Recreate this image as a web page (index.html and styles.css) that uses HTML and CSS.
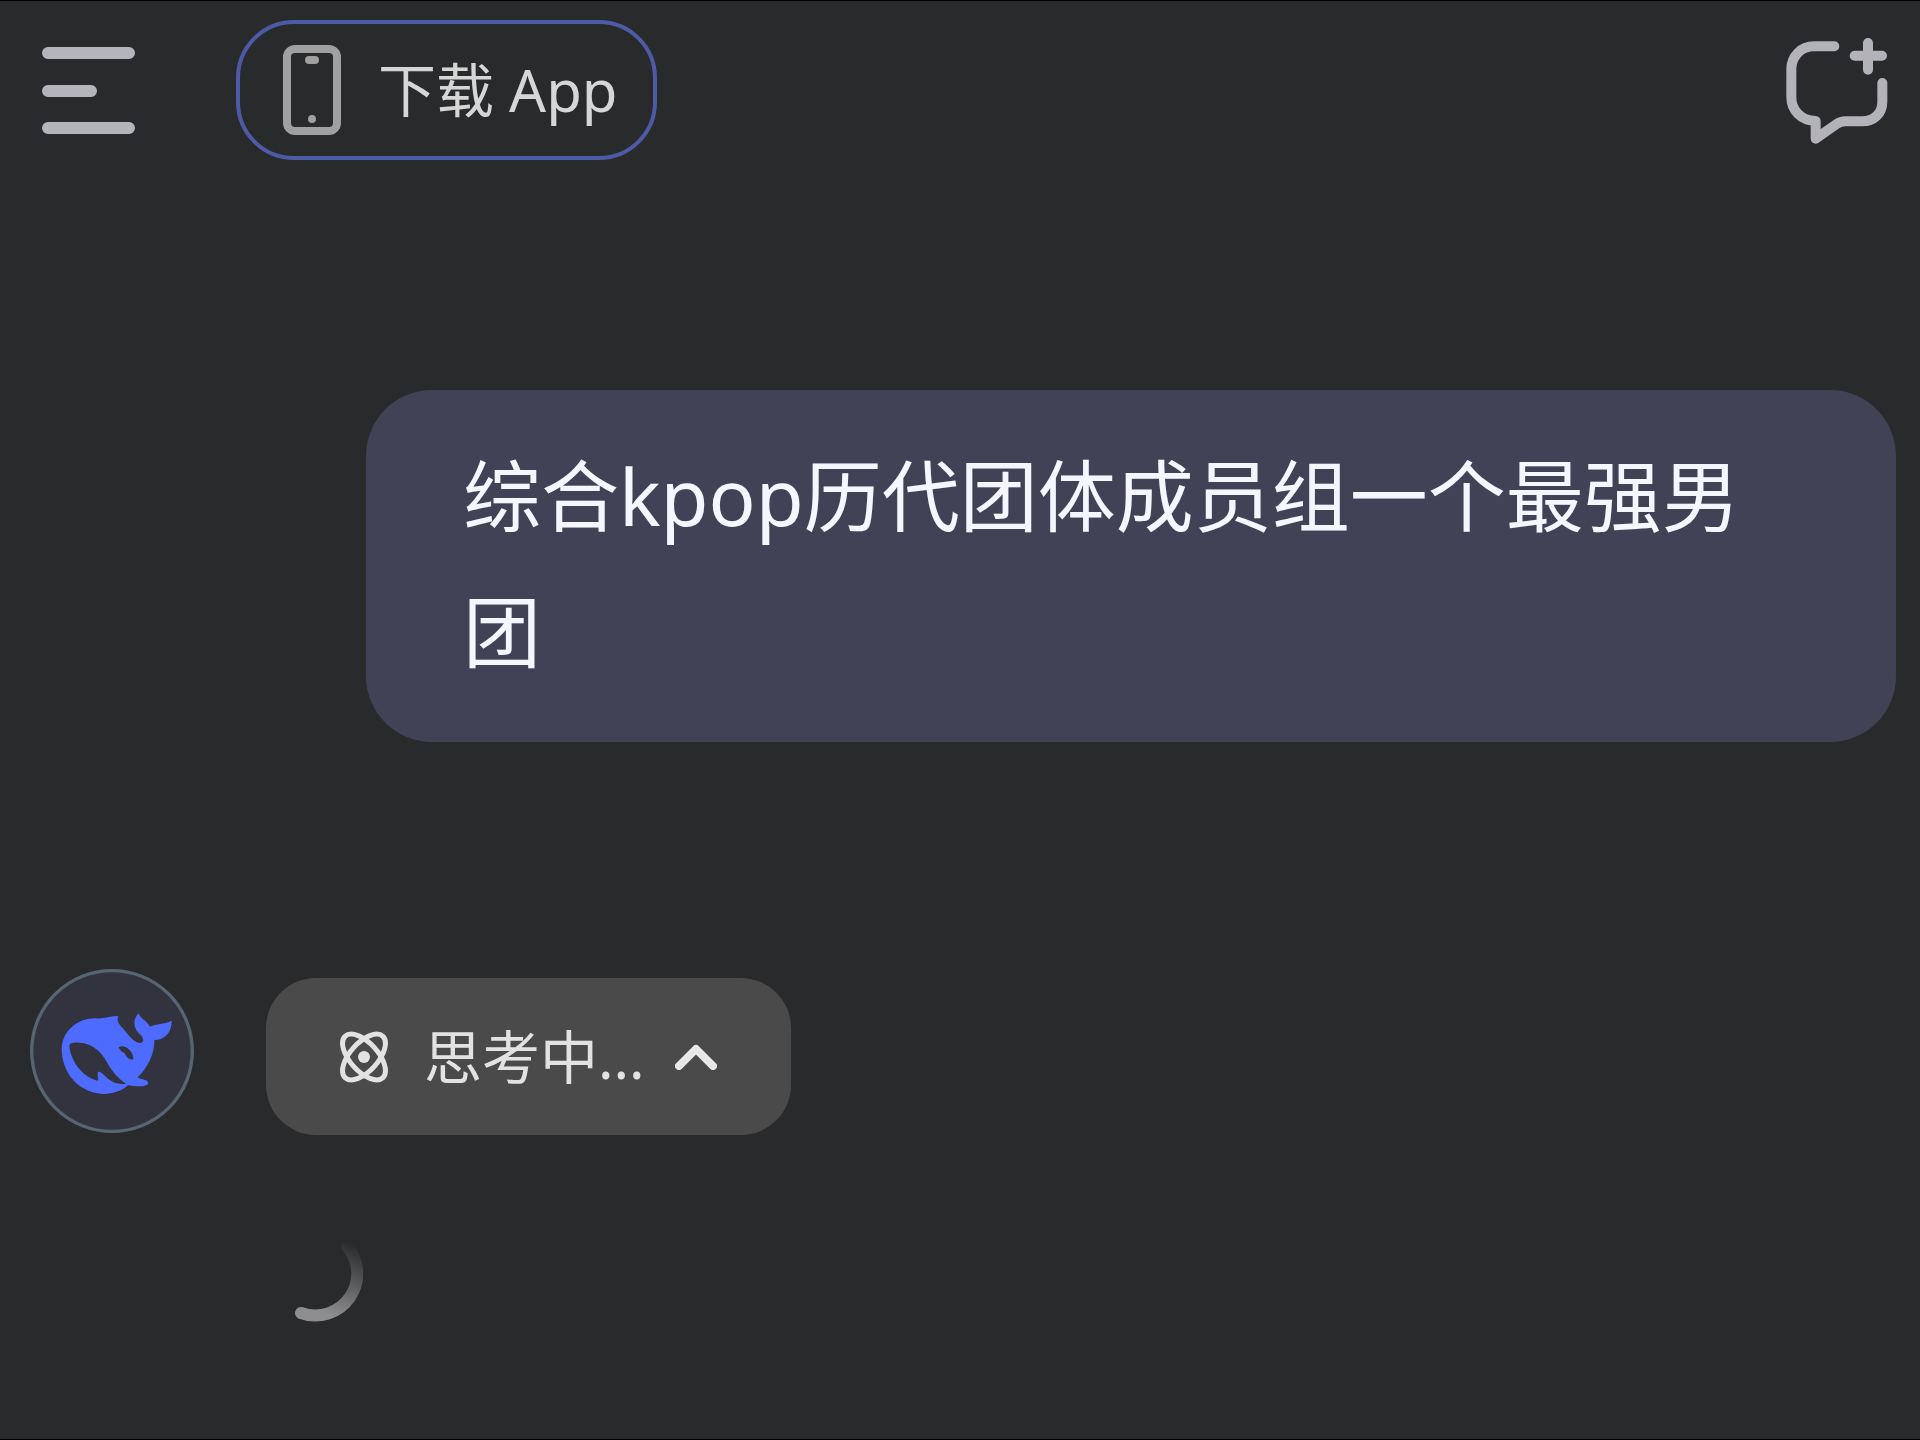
FILE: index.html
```html
<!DOCTYPE html>
<html lang="zh-CN">

<head>
    <meta charset="UTF-8">
    <meta name="viewport" content="width=device-width, initial-scale=1.0">
    <title>Chat</title>
    <link rel="stylesheet" href="styles.css">
</head>

<body>
    <header class="topbar">
        <button class="icon-button" aria-label="菜单">
            <svg class="menu-icon" viewBox="0 0 94 88">
                <path d="M6 7H87M6 45H49M6 82H87" />
            </svg>
        </button>
        <a class="download" href="#">
            <svg class="phone-icon" viewBox="0 0 58 90">
                <rect x="4" y="4" width="50" height="82" rx="8" />
                <path class="speaker" d="M26 15h6" />
                <circle cx="29" cy="74" r="4" />
            </svg>
            <span>下载 App</span>
        </a>
        <button class="icon-button new-chat" aria-label="新对话">
            <svg class="new-chat-icon" viewBox="80 50 306 330">
                <path d="M225 84H164C125 84 96 114 96 152V236C96 276 124 306 169 308V361L232 317Q244 309 258 309H308C344 309 369 285 369 250V194" />
                <path d="M326 74V154M286 112H368" />
            </svg>
        </button>
    </header>

    <main class="chat">
        <div class="message">综合kpop历代团体成员组一个最强男团</div>

        <div class="reply">
            <svg class="avatar" viewBox="60 57 492 492">
                <circle class="ring" cx="306" cy="303" r="241" />
                <path class="whale" fill-rule="evenodd" d="M325 198C319 211 325 222 340 236C356 256 372 278 392 279C402 276 402 266 392 255C374 240 364 215 385 190C392 206 410 212 420 230C440 220 462 224 485 212C486 242 468 270 433 270C434 308 415 352 383 382C391 390 411 386 415 399C411 412 382 410 354 406C327 430 290 435 262 430C200 420 155 365 155 295C158 240 205 205 255 205C285 207 296 198 325 198Z
                    M178 285C185 275 202 277 222 280C255 288 275 310 290 335C305 363 325 386 348 401C320 405 302 394 285 378C276 369 268 363 264 366C260 376 268 385 262 392C215 380 180 330 178 285Z
                    M326 292C344 280 372 306 370 328C358 332 348 320 344 310C337 307 329 301 326 292Z" />
            </svg>
            <div class="reply-body">
                <button class="thinking" aria-expanded="true">
                    <svg class="atom-icon" viewBox="-1 -1 52 52">
                        <ellipse cx="25" cy="25" rx="28" ry="14" transform="rotate(48 25 25)" />
                        <ellipse cx="25" cy="25" rx="28" ry="14" transform="rotate(-48 25 25)" />
                        <circle cx="25" cy="25" r="6" />
                    </svg>
                    <span>思考中...</span>
                    <svg class="chevron-icon" viewBox="0 0 42 26">
                        <path d="M4 22L21 5L38 22" />
                    </svg>
                </button>
                <svg class="spinner" viewBox="0 0 100 100">
                    <defs>
                        <linearGradient id="fade" gradientUnits="userSpaceOnUse" x1="80" y1="12" x2="53" y2="82">
                            <stop offset="0" stop-color="#8e8e90" stop-opacity="0" />
                            <stop offset="1" stop-color="#8e8e90" />
                        </linearGradient>
                    </defs>
                    <path d="M35 84A42 42 0 0 0 81 17" stroke="url(#fade)" />
                </svg>
            </div>
        </div>
    </main>
</body>

</html>
```
FILE: styles.css
```css
* {
    box-sizing: border-box;
}

body {
    min-height: 100vh;
    margin: 0;
    border-top: 1px solid #000;
    border-bottom: 1px solid #000;
    background-color: #292a2c;
    color: #dcdcde;
    font-family: "Noto Sans", "Noto Sans CJK SC", sans-serif;
    font-size: 58px;
}

button {
    padding: 0;
    border: none;
    background: none;
    color: inherit;
    font: inherit;
    cursor: pointer;
}

svg {
    display: block;
    flex-shrink: 0;
    fill: none;
    stroke-linecap: round;
    stroke-linejoin: round;
}

.topbar {
    display: flex;
    align-items: center;
    padding: 19px 32px 0 42px;
}

.menu-icon {
    width: 94px;
    height: 88px;
    stroke: #b4b4bc;
    stroke-width: 12;
}

.download {
    display: flex;
    align-items: center;
    gap: 36px;
    height: 140px;
    margin-left: 100px;
    padding: 0 36px 0 42px;
    border: 4px solid #4d5ba6;
    border-radius: 58px;
    color: #d6d6d6;
    line-height: 80px;
    text-decoration: none;
    white-space: nowrap;
}

.phone-icon {
    width: 60px;
    height: 90px;
    stroke: #a0a0a0;
    stroke-width: 8;
}

.phone-icon circle {
    fill: #a0a0a0;
    stroke: none;
}

.new-chat {
    margin-left: auto;
}

.new-chat-icon {
    width: 102px;
    height: 110px;
    stroke: #b2b2b8;
    stroke-width: 30;
}

.chat {
    display: flex;
    flex-direction: column;
    gap: 227px;
    padding: 230px 24px 100px 30px;
}

.message {
    align-self: flex-end;
    width: 82%;
    padding: 38px 97px 42px;
    border-radius: 66px;
    background-color: #414256;
    color: #f5f6ff;
    font-size: 78px;
    line-height: 136px;
}

.reply {
    display: flex;
    align-items: flex-start;
    gap: 72px;
}

.avatar {
    width: 164px;
    height: 164px;
}

.ring {
    fill: #33333f;
    stroke: #566572;
    stroke-width: 10;
}

.whale {
    fill: #4d6bfe;
}

.reply-body {
    padding-top: 9px;
}

.thinking {
    display: flex;
    align-items: center;
    height: 157px;
    padding: 0 74px 0 72px;
    border-radius: 50px;
    background-color: #4a4a4a;
    color: #e2e2e2;
    line-height: 80px;
    white-space: nowrap;
}

.atom-icon {
    width: 52px;
    height: 52px;
    margin-right: 34px;
    stroke: #e2e2e2;
    stroke-width: 5;
}

.atom-icon circle {
    fill: #e2e2e2;
    stroke: none;
}

.chevron-icon {
    width: 42px;
    height: 26px;
    margin-left: 30px;
    stroke: #e8e8e8;
    stroke-width: 8;
}

.spinner {
    width: 100px;
    height: 100px;
    margin-top: 94px;
    stroke-width: 12;
}
```
